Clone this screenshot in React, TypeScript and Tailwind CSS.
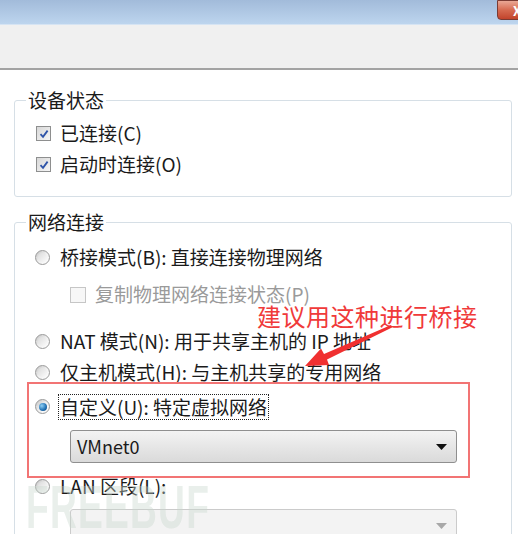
const FONT = { fontFamily: '"Noto Sans CJK SC", "Noto Sans", sans-serif' };

const CheckBox = ({ disabled }: { disabled?: boolean }) =>
  disabled ? (
    <span className="w-[16px] h-[16px] border border-[#c6c6c6] bg-[#f7f7f7] shrink-0" />
  ) : (
    <span className="w-[15px] h-[15px] border border-[#8e8f8f] bg-gradient-to-br from-[#d8d8d8] to-[#f6f6f6] shrink-0 flex items-center justify-center">
      <svg width="10" height="10" viewBox="0 0 10 10">
        <path d="M1.5 5.2 L4 7.8 L8.6 1.6" fill="none" stroke="#2f54a8" strokeWidth="1.8" />
      </svg>
    </span>
  );

const Radio = ({ checked }: { checked?: boolean }) => (
  <span className="w-[15px] h-[15px] rounded-full border border-[#9a9a9a] bg-gradient-to-br from-[#c4c4c4] via-[#f0f0f0] to-[#ffffff] shrink-0 flex items-center justify-center">
    {checked ? (
      <span className="w-[8px] h-[8px] rounded-full bg-[radial-gradient(circle_at_35%_35%,#8fd0f5,#1f6fb2_60%,#0d3f70)]" />
    ) : (
      <span className="w-[9px] h-[9px] rounded-full bg-gradient-to-br from-[#dcdcdc] to-[#fbfbfb]" />
    )}
  </span>
);

const Select = ({ value, disabled }: { value?: string; disabled?: boolean }) => (
  <div
    className={
      disabled
        ? 'ml-[55px] w-[387px] h-[33px] rounded-[3px] border border-[#cbcbcb] bg-[#f3f3f3] flex items-center justify-end pr-[9px]'
        : 'ml-[55px] w-[387px] h-[33px] rounded-[3px] border border-[#8f8f8f] bg-gradient-to-b from-[#f3f3f3] to-[#dadada] flex items-center justify-between pl-[6px] pr-[9px]'
    }
  >
    {value && <span className="text-[18px] text-[#1a1a1a]">{value}</span>}
    <svg width="11" height="6" viewBox="0 0 11 6">
      <path d="M0 0 H11 L5.5 6 Z" fill={disabled ? '#a8a8a8' : '#111'} />
    </svg>
  </div>
);

export default function App() {
  return (
    <div
      className="relative w-[518px] h-[534px] overflow-hidden bg-white text-[#1a1a1a]"
      style={FONT}
    >
      {/* title bar */}
      <div className="relative h-[25px] bg-gradient-to-b from-[#a2bbda] to-[#bdd5ee] border-b border-[#d6e4f3]">
        <div className="absolute left-[497px] top-0 w-[30px] h-[20px] rounded-bl-[4px] border border-[#7a3b33] bg-gradient-to-b from-[#e9a795] via-[#d66a50] to-[#c2432b] flex items-center pl-[15px]">
          <span className="text-white text-[13px] font-bold leading-none">X</span>
        </div>
      </div>

      {/* toolbar strip */}
      <div className="h-[45px] bg-[#f0f0f0] border-b-2 border-[#a3a3a3]" />

      {/* device status */}
      <div className="mt-[30px] ml-[14px] w-[498px] h-[97px] border border-[#d6dfe6] rounded-[3px] text-[19px]">
        <div className="-mt-[12px] ml-[11px] w-fit px-[2px] bg-white leading-[22px]">
          设备状态
        </div>
        <div className="mt-[7px] flex flex-col">
          <div className="h-[31px] flex items-center pl-[21px] gap-[9px]">
            <CheckBox />
            <span>已连接(C)</span>
          </div>
          <div className="h-[31px] flex items-center pl-[21px] gap-[9px]">
            <CheckBox />
            <span>启动时连接(O)</span>
          </div>
        </div>
      </div>

      {/* network connection */}
      <div className="mt-[25px] ml-[14px] w-[498px] h-[330px] border border-[#d6dfe6] rounded-[3px] text-[19px]">
        <div className="-mt-[12px] ml-[11px] w-fit px-[2px] bg-white leading-[22px]">
          网络连接
        </div>
        <div className="mt-[9px] h-[31px] flex items-center pl-[20px] gap-[10px]">
          <Radio />
          <span>桥接模式(B): 直接连接物理网络</span>
        </div>
        <div className="mt-[6px] h-[31px] flex items-center pl-[55px] gap-[9px] text-[#9a9a9a]">
          <CheckBox disabled />
          <span>复制物理网络连接状态(P)</span>
        </div>
        <div className="mt-[16px] h-[31px] flex items-center pl-[20px] gap-[10px]">
          <Radio />
          <span>NAT 模式(N): 用于共享主机的 IP 地址</span>
        </div>
        <div className="h-[31px] flex items-center pl-[20px] gap-[10px]">
          <Radio />
          <span>仅主机模式(H): 与主机共享的专用网络</span>
        </div>
        <div className="mt-[3px] h-[31px] flex items-center pl-[20px] gap-[8px]">
          <Radio checked />
          <span className="border border-dotted border-[#222] px-[1px] leading-[24px]">
            自定义(U): 特定虚拟网络
          </span>
        </div>
        <div className="mt-[8px]">
          <Select value="VMnet0" />
        </div>
        <div className="mt-[8px] h-[31px] flex items-center pl-[20px] gap-[10px]">
          <Radio />
          <span>LAN 区段(L):</span>
        </div>
        <div className="mt-[7px]">
          <Select disabled />
        </div>
      </div>

      {/* annotation */}
      <div className="absolute left-[27px] top-[382px] w-[443px] h-[96px] border-2 border-[#f27474] pointer-events-none" />
      <div className="absolute left-[257px] top-[300px] text-[24px] leading-[32px] text-[#f03a3a] tracking-[0.5px]">
        建议用这种进行桥接
      </div>
      <svg className="absolute left-0 top-0 pointer-events-none" width="518" height="534">
        <polygon
          points="391,325 392,327.5 327,359.5 329,365 305,366 321,348.5 324,354"
          fill="#f03030"
        />
      </svg>

      {/* watermark */}
      <div
        className="absolute left-[26px] top-[476px] text-[62px] font-bold leading-none tracking-[2px] text-[#c9d6cc]/40 origin-left scale-x-[0.6] pointer-events-none"
        style={{ fontFamily: '"Liberation Sans", sans-serif' }}
      >
        FREEBUF
      </div>
    </div>
  );
}
